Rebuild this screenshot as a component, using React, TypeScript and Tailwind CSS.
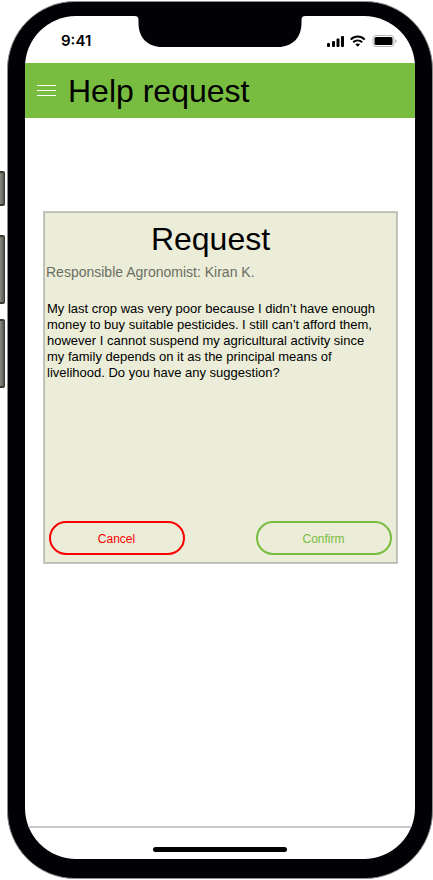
function Notch() {
  return (
    <svg
      className="absolute left-1/2 top-0 -ml-[87px] -mt-px"
      width="174"
      height="33"
      viewBox="0 0 174 33"
      aria-hidden="true"
    >
      <path
        d="M0 0V1H1.5C4.500 1 5.500 2.500 5.500 5V8C5.500 23 15 32 29 32H145C159 32 168.500 23 168.500 8V5C168.500 2.500 169.500 1 172.500 1H174V0Z"
        fill="#020105"
      />
    </svg>
  );
}

function StatusIcons() {
  return (
    <svg width="71" height="14" viewBox="0 0 71 14" aria-hidden="true">
      <rect x="0" y="9" width="3" height="4" rx="1" />
      <rect x="5" y="7" width="3" height="6" rx="1" />
      <rect x="9.500" y="4.500" width="3" height="8.500" rx="1" />
      <rect x="14" y="2" width="3" height="11" rx="1" />
      <g fill="none" stroke="#000" strokeWidth="2">
        <path d="M23.700 5.600C27.700 1.600 33.700 1.600 37.700 5.600" />
        <path d="M26.200 8.300C28.800 5.800 32.600 5.800 35.200 8.300" />
      </g>
      <path d="M28.300 10.300C29.700 9.100 31.700 9.100 33.100 10.300L30.700 12.800Z" />
      <rect x="46" y="1.500" width="21" height="11" rx="3" fill="none" stroke="#b4b4b4" />
      <rect x="47.500" y="3" width="18" height="8" rx="1.500" />
      <path d="M68.300 5.200C70.200 5.900 70.200 8.500 68.300 9.200Z" fill="#b4b4b4" />
    </svg>
  );
}

const sideButton =
  "rounded-r-[2px] border-y-2 border-r border-[#3a3a35] bg-linear-to-r from-[#8b8b84] to-[#55554e]";

export default function App() {
  return (
    <div className="flex min-h-screen bg-white pb-px pt-px font-['Liberation_Sans',Arial,sans-serif] text-black">
      <div className="flex w-[7px] shrink-0 flex-col pr-[2px] pt-[170px]" aria-hidden="true">
        <div className={`h-[35px] ${sideButton}`} />
        <div className={`mt-[29px] h-[69px] ${sideButton}`} />
        <div className={`mt-[15px] h-[69px] ${sideButton}`} />
      </div>

      <div className="flex flex-1 rounded-[68px] border border-[#8c8c8c] bg-[#020105] px-[17px] pb-[19px] pt-[14px]">
        <div className="relative flex flex-1 flex-col overflow-hidden rounded-[51px] bg-white">
          <Notch />
          <div className="flex h-[47px] items-center justify-between pl-9 pr-[17px] pt-[2px]">
            <span className="font-['Inter',sans-serif] text-[15px] font-semibold leading-5">9:41</span>
            <StatusIcons />
          </div>

          <header className="flex h-[55px] items-center gap-3 bg-[#78bc40] pl-3">
            <button type="button" aria-label="Open menu" className="flex w-[19px] flex-col gap-1">
              <span className="h-px bg-white" />
              <span className="h-px bg-white" />
              <span className="h-px bg-white" />
            </button>
            <h1 className="text-[32px] leading-9">Help request</h1>
          </header>

          <main className="flex flex-1 flex-col pl-[18px] pr-[17px] pt-[93px]">
            <section className="flex h-[353px] flex-col border border-[#c8c8c8] bg-[#ebedd8] p-px inset-ring-1 inset-ring-[#bbbdac]">
              <h2 className="pr-5 pt-2 text-center text-[32px] leading-9">Request</h2>
              <p className="pl-px pt-[5px] text-[14px] leading-5 text-[#6c6d63]">
                Responsible Agronomist: Kiran K.
              </p>
              <p className="pl-[2px] pr-4 pt-[19px] text-[13px] leading-4">
                My last crop was very poor because I didn’t have enough money to buy suitable
                pesticides. I still can’t afford them, however I cannot suspend my agricultural
                activity since my family depends on it as the principal means of livelihood. Do you
                have any suggestion?
              </p>
              <div className="mt-auto flex justify-between px-1 pb-[7px]">
                <button
                  type="button"
                  className="h-[34px] w-[136px] rounded-full border-2 border-[#fa0000] pr-px pt-px text-[12px] text-[#fa0000]"
                >
                  Cancel
                </button>
                <button
                  type="button"
                  className="h-[34px] w-[136px] rounded-full border-2 border-[#78bc40] pr-px pt-px text-[12px] text-[#78bc40]"
                >
                  Confirm
                </button>
              </div>
            </section>
          </main>

          <footer className="flex h-[33px] items-end justify-center border-t-2 border-[#c8c8c8] pb-[7px]">
            <div className="h-[5px] w-[134px] rounded-full bg-black" />
          </footer>
        </div>
      </div>
    </div>
  );
}
